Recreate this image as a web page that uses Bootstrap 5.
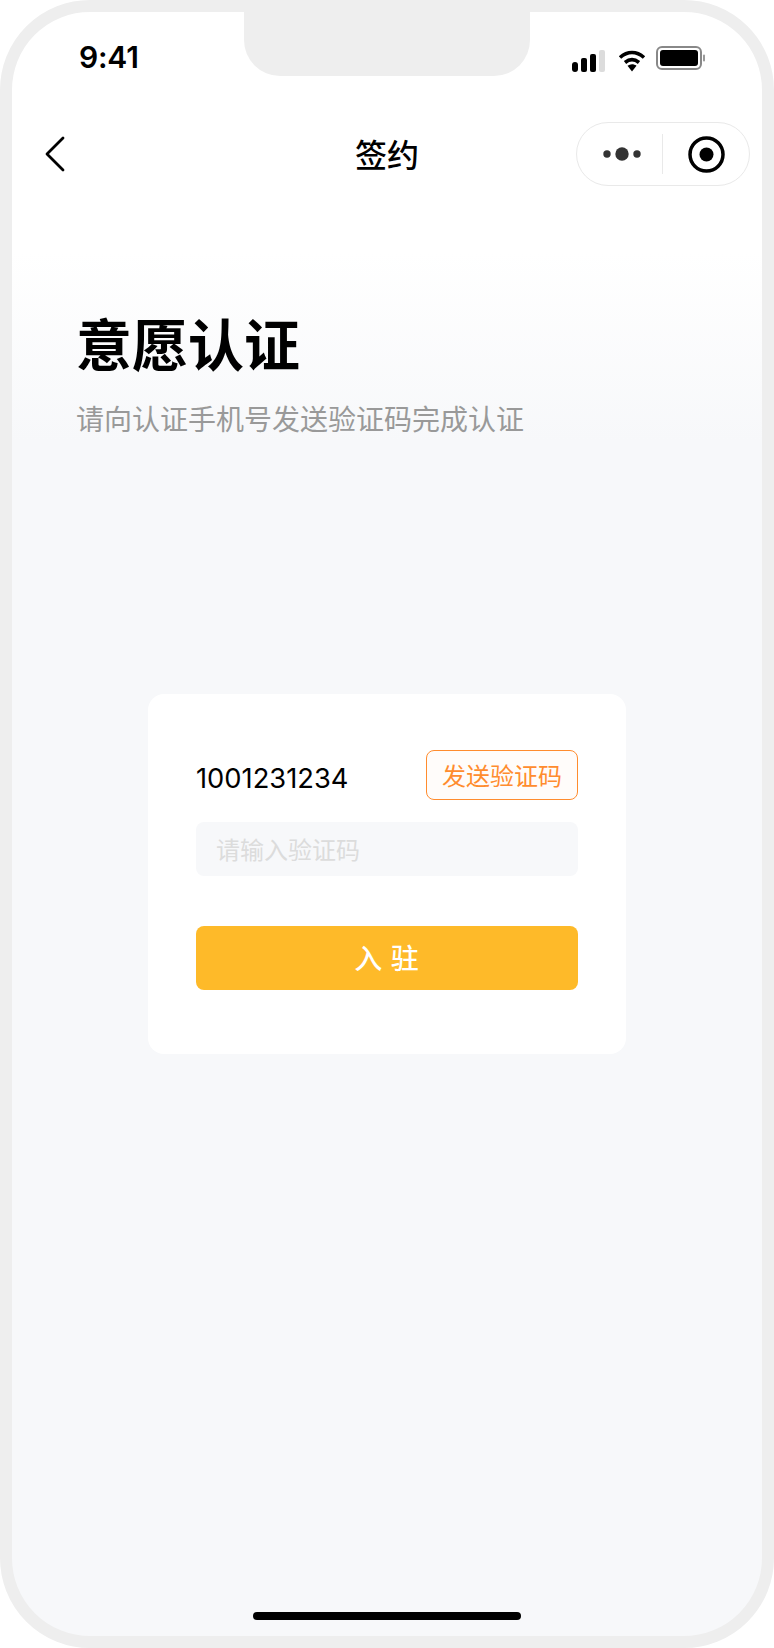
<!DOCTYPE html>
<html lang="zh">
<head>
<meta charset="utf-8">
<title>签约</title>
<link href="https://cdn.jsdelivr.net/npm/bootstrap@5.3.0/dist/css/bootstrap.min.css" rel="stylesheet">
<style>
html,body{margin:0;background:#fff;}
body{width:774px;height:1648px;font-family:"Noto Sans CJK SC","Liberation Sans",sans-serif;color:#000;overflow:hidden;}
.phone-frame{width:774px;height:1648px;border:12px solid #eee;border-radius:90px;background:linear-gradient(180deg,#fff 0,#fff 240px,#f7f8fa 430px);overflow:hidden;}
.status-row{height:64px;}
.status-side{width:232px;}
.clock{font-family:Inter,sans-serif;font-weight:600;font-size:30px;line-height:36px;padding-left:67px;padding-top:27px;letter-spacing:-.2px;}
.notch{width:286px;height:64px;background:#eee;border-radius:0 0 36px 36px;}
.status-icons{padding-top:34px;padding-left:42px;gap:9px;}
.battery-icon{margin-left:1px;}
.nav-row{height:64px;margin-top:46px;padding-left:33px;padding-right:12px;}
.nav-title{font-size:32px;font-weight:500;line-height:62px;left:0;right:0;text-align:center;}
.capsule{width:174px;height:64px;border:1px solid #e9e9e9;border-radius:32px;}
.capsule-rule{width:1px;height:40px;background:#e9e9e9;}
.capsule-dots{width:85px;padding-left:5px;}
.capsule-target{width:87px;padding-left:2px;}
.intro{padding-left:64px;margin-top:120px;}
.intro-title{font-size:56px;font-weight:700;line-height:72px;margin:0;}
.intro-sub{font-size:28px;line-height:40px;color:#999;margin:20px 0 0;}
.sign-card{width:478px;height:360px;border:0;border-radius:16px;padding:56px 48px 0;margin:256px auto 0;background:#fff;}
.phone-no{font-family:Inter,"Liberation Sans",sans-serif;font-size:27.300px;line-height:1;padding-top:15px;}
.send-btn{width:152px;height:50px;padding:0;border:1px solid #ff8c2e;border-radius:8px;background:#fffcfa;color:#ff8c2e;font-size:24px;line-height:46px;}
.send-btn:hover{background:#fffcfa;color:#ff8c2e;border-color:#ff8c2e;}
.code-input{height:54px;margin-top:22px;padding:0 20px 2px;background:#f7f8fa;border:0;border-radius:8px;font-size:24px;}
.code-input::placeholder{color:#dcdcdc;opacity:1;}
.join-btn{height:64px;margin-top:50px;padding:0 0 2px;border:0;border-radius:8px;background:#feba29;color:#fff;font-size:28px;font-weight:500;line-height:60px;letter-spacing:1px;}
.join-btn:hover{background:#feba29;color:#fff;}
.home-bar{width:268px;height:8px;border-radius:4px;background:#000;margin:0 auto 16px;}
</style>
</head>
<body>
<div class="phone-frame d-flex flex-column">
  <div class="status-row d-flex flex-shrink-0">
    <div class="status-side clock">9:41</div>
    <div class="notch flex-shrink-0"></div>
    <div class="status-side status-icons d-flex align-items-start">
      <svg width="33" height="22" viewBox="0 0 33 22" class="mt-1"><rect x="0" y="12" width="6" height="10" rx="3" fill="#000"/><rect x="9" y="8" width="6" height="14" rx="2" fill="#000"/><rect x="18" y="4" width="6" height="18" rx="2" fill="#000"/><rect x="27" y="0" width="6" height="22" rx="2" fill="#dcdcdc"/></svg>
      <svg width="28" height="22" viewBox="0 0 28 22" class="mt-1 ms-1"><path d="M2 7.5C9.5.8 18.500.8 26 7.500" fill="none" stroke="#000" stroke-width="3.600"/><path d="M7 12.500c4.500-3.700 9.500-3.700 14 0" fill="none" stroke="#000" stroke-width="3.600"/><path d="M9.500 15.800c2.800-2 6.200-2 9 0L14 21.500z" fill="#000"/></svg>
      <svg width="50" height="24" viewBox="0 0 50 24" class="battery-icon"><rect x="1" y="1" width="44" height="22" rx="5" fill="none" stroke="#888" stroke-width="2"/><rect x="4" y="4" width="38" height="16" rx="3" fill="#000"/><rect x="47" y="8.500" width="2" height="7" rx="1" fill="#999"/></svg>
    </div>
  </div>

  <div class="nav-row d-flex align-items-center justify-content-between position-relative flex-shrink-0">
    <svg width="20" height="36" viewBox="0 0 20 36" class="d-block"><path d="M18 2 2 18l16 16" fill="none" stroke="#000" stroke-width="2.800" stroke-linecap="round" stroke-linejoin="round"/></svg>
    <div class="nav-title position-absolute top-0">签约</div>
    <div class="capsule d-flex align-items-center position-relative bg-white">
      <div class="capsule-dots d-flex justify-content-center">
        <svg width="38" height="16" viewBox="0 0 38 16" class="d-block"><circle cx="4" cy="8" r="3.700" fill="#333"/><circle cx="19" cy="8" r="6.700" fill="#333"/><circle cx="34" cy="8" r="3.700" fill="#333"/></svg>
      </div>
      <div class="capsule-rule"></div>
      <div class="capsule-target d-flex justify-content-center">
        <svg width="37" height="37" viewBox="0 0 37 37" class="d-block"><circle cx="18.500" cy="18.500" r="16.500" fill="none" stroke="#000" stroke-width="3.500"/><circle cx="18.500" cy="18.500" r="7" fill="#000"/></svg>
      </div>
    </div>
  </div>

  <div class="intro flex-shrink-0">
    <h1 class="intro-title">意愿认证</h1>
    <p class="intro-sub">请向认证手机号发送验证码完成认证</p>
  </div>

  <div class="card sign-card flex-shrink-0">
    <div class="d-flex justify-content-between align-items-start">
      <span class="phone-no">1001231234</span>
      <button type="button" class="btn send-btn">发送验证码</button>
    </div>
    <input type="text" class="form-control code-input shadow-none" placeholder="请输入验证码">
    <button type="button" class="btn w-100 join-btn">入&nbsp;驻</button>
  </div>

  <div class="home-bar mt-auto flex-shrink-0"></div>
</div>
</body>
</html>
